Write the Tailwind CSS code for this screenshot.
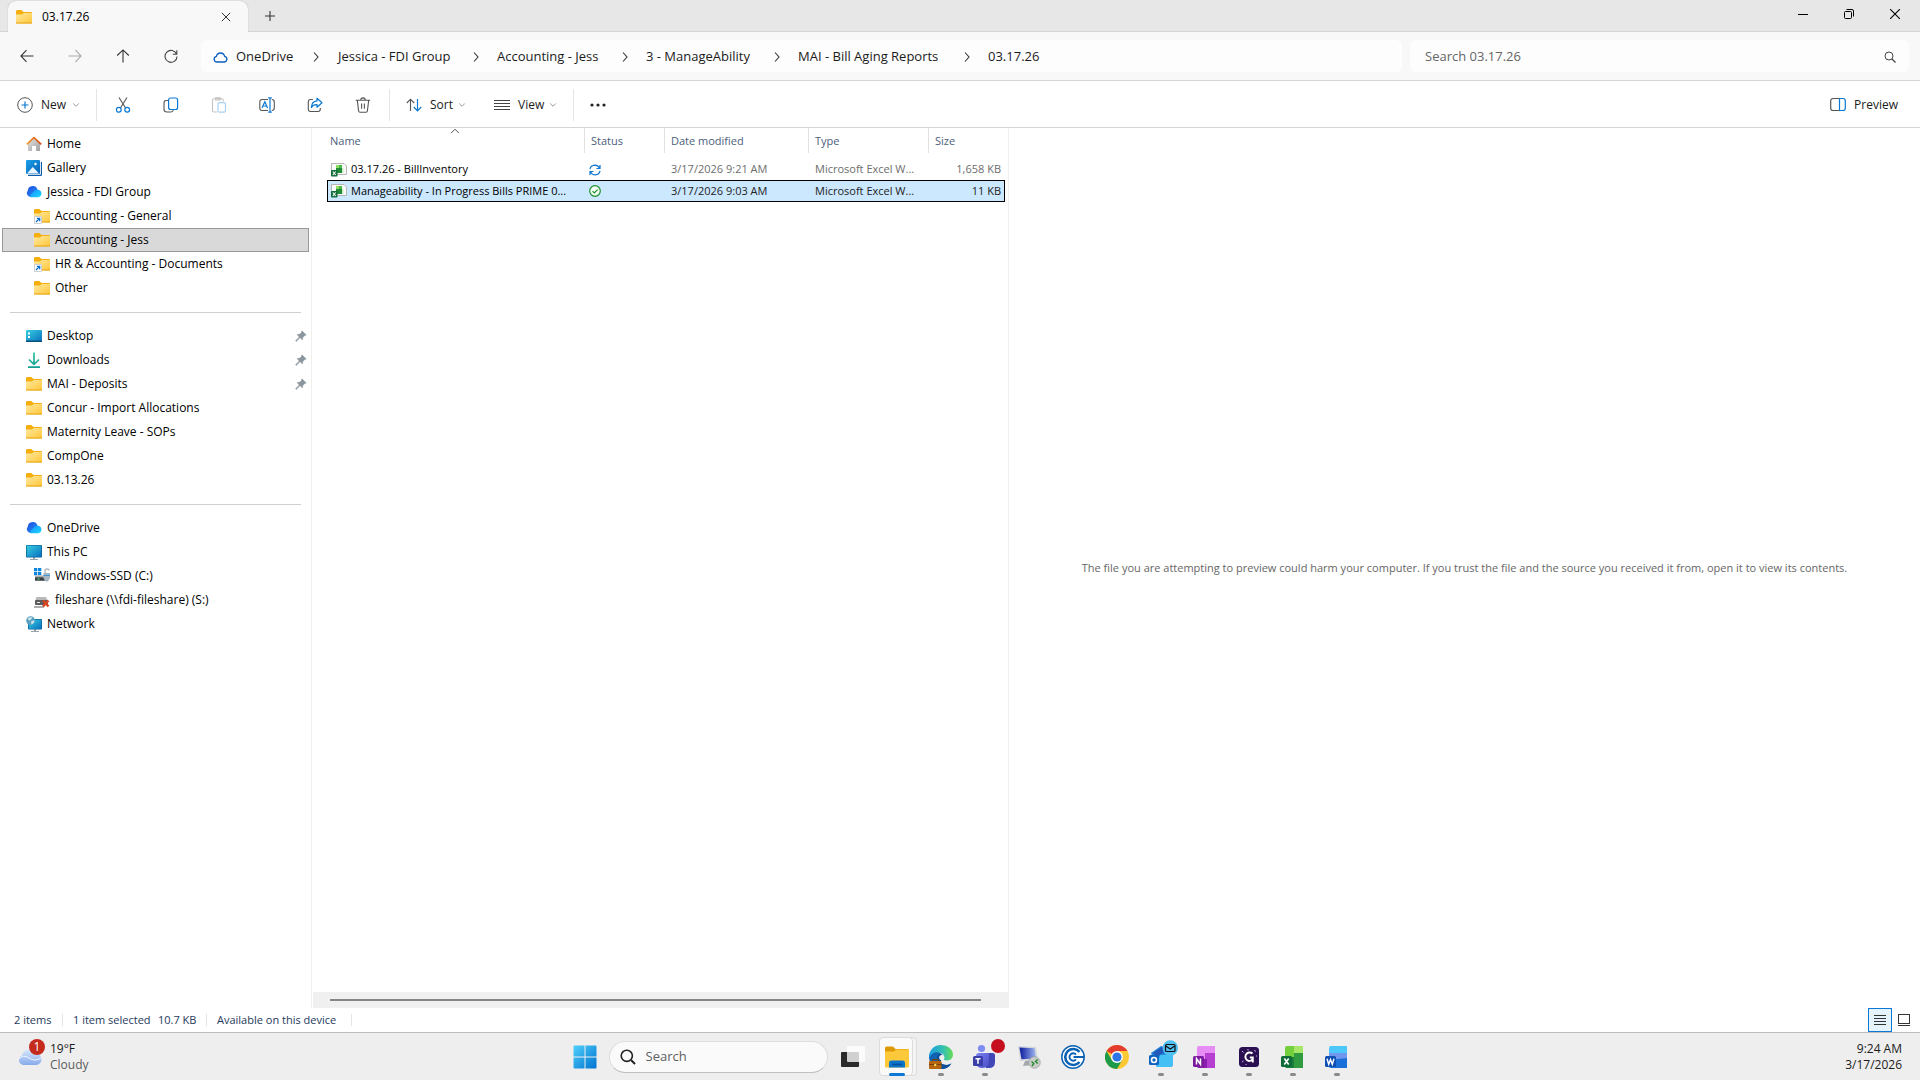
<!DOCTYPE html>
<html lang="en">
<head>
<meta charset="utf-8">
<title>03.17.26 - File Explorer</title>
<script src="https://cdn.jsdelivr.net/npm/@tailwindcss/browser@4"></script>
</head>
<body class="flex h-screen flex-col overflow-hidden bg-white font-['Open_Sans','Noto_Sans',sans-serif] text-xs text-black">

<!-- Shared gradients and icons -->
<svg class="absolute size-0" aria-hidden="true">
  <defs>
    <linearGradient id="gFolder" x1="0" y1="0" x2="1" y2="1"><stop offset="0" stop-color="#ffe9a2"/><stop offset="1" stop-color="#fdc638"/></linearGradient>
    <linearGradient id="gBlue" x1="0" y1="0" x2="1" y2="1"><stop offset="0" stop-color="#35d0e0"/><stop offset="1" stop-color="#0a6fc0"/></linearGradient>
    <linearGradient id="gPic" x1="0" y1="0" x2="1" y2="1"><stop offset="0" stop-color="#1aa0ea"/><stop offset="1" stop-color="#0a62b8"/></linearGradient>
    <linearGradient id="gHouse" x1="0" y1="0" x2="1" y2="1"><stop offset="0" stop-color="#e4e4e4"/><stop offset="1" stop-color="#a0a0a0"/></linearGradient>
    <linearGradient id="gRoof" x1="0" y1="0" x2="1" y2="0"><stop offset="0" stop-color="#f59a2c"/><stop offset="1" stop-color="#d44a17"/></linearGradient>
    <linearGradient id="gDown" x1="0" y1="0" x2="0" y2="16" gradientUnits="userSpaceOnUse"><stop offset="0" stop-color="#2cc39a"/><stop offset="1" stop-color="#0f9d94"/></linearGradient>
    <linearGradient id="gWin" x1="0" y1="0" x2="1" y2="1"><stop offset="0" stop-color="#4fd0fb"/><stop offset="1" stop-color="#0072d0"/></linearGradient>
    <linearGradient id="gCloudA" x1="0" y1="0" x2="1" y2="1"><stop offset="0" stop-color="#1b52d8"/><stop offset="1" stop-color="#2a8bff"/></linearGradient>
    <linearGradient id="gCloudB" x1="0" y1="0" x2="1" y2="1"><stop offset="0" stop-color="#1f8fff"/><stop offset="1" stop-color="#15d8ff"/></linearGradient>
    <linearGradient id="gWeather" x1="0" y1="0" x2="0" y2="1"><stop offset="0" stop-color="#d8e8fd"/><stop offset="1" stop-color="#86aaea"/></linearGradient>
    <linearGradient id="gEdge" x1="0" y1="0" x2="1" y2="0"><stop offset="0" stop-color="#1b9de2"/><stop offset=".6" stop-color="#35c1b0"/><stop offset="1" stop-color="#66dd55"/></linearGradient>
    <linearGradient id="gTeams" x1="0" y1="0" x2="1" y2="1"><stop offset="0" stop-color="#7b83f5"/><stop offset="1" stop-color="#4a4fc4"/></linearGradient>
    <linearGradient id="gScreen" x1="0" y1="0" x2="1" y2="0"><stop offset="0" stop-color="#0a1a9c"/><stop offset="1" stop-color="#9fb7f0"/></linearGradient>
  </defs>
  <symbol id="folder" viewBox="0 0 16 16">
    <path d="M0 2.5Q0 1 1.2 1H5.4L7.6 3H15Q16 3 16 4V7H0Z" fill="#f5ae0d"/>
    <path d="M0 5.5H6L7.800 4H16V14Q16 14.500 15.500 14.500H.5Q0 14.500 0 14Z" fill="url(#gFolder)"/>
    <path d="M0 13.500H16V14Q16 14.500 15.500 14.500H.5Q0 14.500 0 14Z" fill="#e8a317"/>
  </symbol>
  <symbol id="folder-link" viewBox="0 0 16 16">
    <use href="#folder"/>
    <path d="M.5 8.5H7.5V15.5H.5Z" fill="#fff" stroke="#cfcfcf"/>
    <path d="M2 14L5.4 10.6M2.8 10.3H5.7V13.2" fill="none" stroke="#0a6fcf" stroke-width="1.3"/>
  </symbol>
  <symbol id="onedrive" viewBox="0 0 16 16">
    <path d="M4.500 13A4 4 0 0 1 1.800 6.400 5 5 0 0 1 11.500 5.500L6 13Z" fill="url(#gCloudA)"/>
    <path d="M4.400 13.200Q3.600 10.600 7 8.200 10 4.600 13.200 6A3.800 3.800 0 0 1 12.600 13.200Z" fill="url(#gCloudB)"/>
  </symbol>
  <symbol id="pin" viewBox="0 0 12 12">
    <path d="M7 .8L11.2 5 9.6 5.5 7.8 7.6 7.4 9.8 5 7.6 1.2 11.4.6 10.8 4.4 7 2.2 4.6 4.6 4.2 6.6 2.4Z" fill="#8a949c" stroke="#8a949c" stroke-width=".6"/>
  </symbol>
  <symbol id="excel-file" viewBox="0 0 16 16">
    <path d="M.5 1.500H13L15.500 4V12.500H.5Z" fill="#fafafa" stroke="#b5b5b5"/>
    <path d="M5 3H8V6H5Z" fill="#8fdc62"/><path d="M8 3H11V6H8Z" fill="#4cb944"/><path d="M5 6H11V11H5Z" fill="#1f8a38"/><path d="M11 6H12.500V11H11Z" fill="#cfeec2"/>
    <rect x="0" y="8" width="6.500" height="6.500" rx=".8" fill="#0f6b38"/>
    <path d="M1.800 9.500L4.700 13M4.700 9.500L1.800 13" stroke="#fff" stroke-width="1.100"/>
  </symbol>
  <symbol id="chev-right" viewBox="0 0 8 12"><path d="M2 1.5L6 6 2 10.5" fill="none" stroke="#333" stroke-width="1.1"/></symbol>
  <symbol id="chev-down" viewBox="0 0 8 8"><path d="M1.2 2.5L4 5.3 6.8 2.5" fill="none" stroke="#999" stroke-width="1"/></symbol>
</svg>

<!-- Tab strip -->
<header class="flex h-8 shrink-0 items-stretch border-b border-[#d4d4d4] bg-[#e7e7e7]">
  <div class="-mb-px ml-2 mt-px flex w-60 items-center rounded-t-lg bg-[#f8f8f8] pl-2 pr-3 shadow-[0_0_1px_#999] [clip-path:inset(-2px_-2px_0_-2px)]">
    <svg class="size-4"><use href="#folder"/></svg>
    <span class="ml-2.5 flex-1">03.17.26</span>
    <button class="grid size-5 place-items-center" aria-label="Close tab"><svg class="size-2.5" viewBox="0 0 10 10"><path d="M.8.8L9.2 9.2M9.2.8L.8 9.2" stroke="#333"/></svg></button>
  </div>
  <button class="ml-2.5 grid w-6 place-items-center" aria-label="New tab"><svg class="size-3" viewBox="0 0 12 12"><path d="M6 1V11M1 6H11" stroke="#333" stroke-width="1.1"/></svg></button>
  <div class="ml-auto flex h-7 pr-0.5">
    <button class="grid w-[46px] place-items-center" aria-label="Minimize"><svg class="size-2.5" viewBox="0 0 10 10"><path d="M0 5.5H10" stroke="#000"/></svg></button>
    <button class="grid w-[46px] place-items-center" aria-label="Restore"><svg class="size-2.5" viewBox="0 0 10 10"><rect x=".5" y="2.5" width="7" height="7" rx="1" fill="none" stroke="#000"/><path d="M2.5.5H8Q9.5.5 9.5 2V7.5" fill="none" stroke="#000"/></svg></button>
    <button class="grid w-[46px] place-items-center" aria-label="Close window"><svg class="size-2.5" viewBox="0 0 10 10"><path d="M0 0L10 10M10 0L0 10" stroke="#000" stroke-width="1.1"/></svg></button>
  </div>
</header>

<!-- Navigation and address -->
<div class="flex h-[49px] shrink-0 items-center border-b border-[#d4d4d4] bg-[#f8f8f8] pr-[11px] text-[#1b1b1b]">
  <nav class="flex w-[201px] gap-6 pl-[15px]" aria-label="History">
    <button class="grid size-6 place-items-center" aria-label="Back"><svg class="size-3.5" viewBox="0 0 14 14"><path d="M13.5 7H1M6.5 1.2L.9 7 6.5 12.8" fill="none" stroke="#333" stroke-width="1.1"/></svg></button>
    <button class="grid size-6 place-items-center" aria-label="Forward" disabled><svg class="size-3.5" viewBox="0 0 14 14"><path d="M.5 7H13M7.5 1.2L13.1 7 7.5 12.8" fill="none" stroke="#aaa" stroke-width="1.1"/></svg></button>
    <button class="grid size-6 place-items-center" aria-label="Up"><svg class="size-3.5" viewBox="0 0 14 14"><path d="M7 13.5V1M1.2 6.5L7 .9 12.8 6.5" fill="none" stroke="#333" stroke-width="1.1"/></svg></button>
    <button class="grid size-6 place-items-center" aria-label="Refresh"><svg class="size-3.5" viewBox="0 0 14 14"><path d="M12.6 5.2A6 6 0 1 0 13 7.4M12.8 1.2V5.2H8.8" fill="none" stroke="#444" stroke-width="1.1"/></svg></button>
  </nav>
  <nav class="flex h-8 flex-1 items-center rounded-md bg-[#fdfdfd] pl-3 pt-px text-[13px]" aria-label="Address">
    <svg class="mr-2 h-3.5 w-[15px]" viewBox="0 0 15 14"><path d="M3.6 12A2.9 2.9 0 0 1 3.4 6.3 4.2 4.2 0 0 1 11.6 6.3 2.9 2.9 0 0 1 11.4 12Z" fill="none" stroke="#0a5fc0" stroke-width="1.3"/></svg>
    <a href="#" class="w-[58px] whitespace-nowrap">OneDrive</a><svg class="mx-[18px] h-3 w-2"><use href="#chev-right"/></svg>
    <a href="#" class="w-[117px] whitespace-nowrap">Jessica - FDI Group</a><svg class="mx-[17px] h-3 w-2"><use href="#chev-right"/></svg>
    <a href="#" class="w-[107px] whitespace-nowrap">Accounting - Jess</a><svg class="mx-[17px] h-3 w-2"><use href="#chev-right"/></svg>
    <a href="#" class="w-[110px] whitespace-nowrap">3 - ManageAbility</a><svg class="mx-[17px] h-3 w-2"><use href="#chev-right"/></svg>
    <a href="#" class="w-[148px] whitespace-nowrap">MAI - Bill Aging Reports</a><svg class="mx-[17px] h-3 w-2"><use href="#chev-right"/></svg>
    <a href="#">03.17.26</a>
  </nav>
  <label class="ml-2 flex h-8 w-[499px] items-center rounded-md bg-[#fdfdfd] pl-[15px] pr-[13px] pt-px text-[13px]">
    <input type="search" placeholder="Search 03.17.26" aria-label="Search 03.17.26" class="min-w-0 flex-1 bg-transparent outline-none placeholder:text-[#666]">
    <svg class="size-3" viewBox="0 0 12 12"><circle cx="5" cy="5" r="4" fill="none" stroke="#444"/><path d="M8 8L11.5 11.5" stroke="#444" stroke-width="1.2"/></svg>
  </label>
</div>

<!-- Command bar -->
<div class="flex h-[47px] shrink-0 items-center border-b border-[#d4d4d4] pl-[17px] pr-[22px] pt-0.5 text-[#1b1b1b]" role="toolbar">
  <button class="flex items-center"><svg class="mr-2 size-4" viewBox="0 0 16 16"><circle cx="8" cy="8" r="7.3" fill="none" stroke="#555"/><path d="M8 4.5V11.5M4.5 8H11.5" stroke="#0a78d4" stroke-width="1.2"/></svg><span class="w-[31px] text-left">New</span><svg class="size-2"><use href="#chev-down"/></svg></button>
  <div class="ml-4 mr-3.5 h-8 w-px bg-[#e5e5e5]"></div>
  <div class="flex gap-6">
    <button class="grid size-6 place-items-center" aria-label="Cut"><svg class="size-4" viewBox="0 0 16 16"><path d="M4 .5L10.6 11M12 .5L5.4 11" stroke="#555" stroke-width="1.1"/><circle cx="3.8" cy="12.8" r="2.4" fill="none" stroke="#0a78d4" stroke-width="1.2"/><circle cx="12.2" cy="12.8" r="2.4" fill="none" stroke="#0a78d4" stroke-width="1.2"/></svg></button>
    <button class="grid size-6 place-items-center" aria-label="Copy"><svg class="size-4" viewBox="0 0 16 16"><path d="M5 3.5H3Q1 3.5 1 6V12.5Q1 15 4 15H8Q10 15 10.3 13" fill="none" stroke="#555" stroke-width="1.1"/><rect x="5.6" y="1" width="9" height="11.5" rx="2" fill="none" stroke="#0a78d4" stroke-width="1.2"/></svg></button>
    <button class="grid size-6 place-items-center" aria-label="Paste" disabled><svg class="size-4" viewBox="0 0 16 16"><path d="M6 15H3Q1.5 15 1.5 13.5V3Q1.5 1.8 3 1.8H11Q12.3 1.8 12.3 3V4.5M4.5.8H9.3V3H4.5Z" fill="none" stroke="#c4c4c4" stroke-width="1.1"/><rect x="7" y="5.6" width="7.5" height="9.6" rx="1.5" fill="none" stroke="#a9d0f0" stroke-width="1.2"/></svg></button>
    <button class="grid size-6 place-items-center" aria-label="Rename"><svg class="size-4" viewBox="0 0 16 16"><path d="M9 2.5H3Q.8 2.5.8 5V11Q.8 13.5 3 13.5H9M12.8 2.5Q15.3 2.5 15.3 5V11Q15.3 13.5 12.8 13.5" fill="none" stroke="#555" stroke-width="1.1"/><path d="M3 11L5.8 4.8 8.6 11M4 9H7.6M11 .8V15.2M9.2.8H12.8M9.2 15.2H12.8" fill="none" stroke="#0a78d4" stroke-width="1.2"/></svg></button>
    <button class="grid size-6 place-items-center" aria-label="Share"><svg class="size-4" viewBox="0 0 16 16"><path d="M6 2.5H3.5Q1.3 2.5 1.3 5V12Q1.3 14.5 3.5 14.5H11Q13.3 14.5 13.3 12V11" fill="none" stroke="#555" stroke-width="1.1"/><path d="M10 1.2L15 5.8 10 10.2V7.7Q6 7.5 4.4 10.5 4.6 4.4 10 3.9Z" fill="none" stroke="#0a78d4" stroke-width="1.2" stroke-linejoin="round"/></svg></button>
    <button class="grid size-6 place-items-center" aria-label="Delete"><svg class="size-4" viewBox="0 0 16 16"><path d="M.8 3.2H15.2M5.8 3Q5.8.9 8 .9T10.2 3M2.3 3.4L3.6 14Q3.8 15.2 5 15.2H11Q12.2 15.2 12.4 14L13.7 3.4M6.6 6.4V11.8M9.4 6.4V11.8" fill="none" stroke="#555" stroke-width="1.1"/></svg></button>
  </div>
  <div class="ml-3.5 mr-4 h-8 w-px bg-[#e5e5e5]"></div>
  <button class="flex items-center"><svg class="mr-2 size-4" viewBox="0 0 16 16"><path d="M4.5 14V2.5M.8 6L4.5 2.2 8.2 6" fill="none" stroke="#555" stroke-width="1.1"/><path d="M11.5 2V13.5M7.8 10L11.5 13.8 15.2 10" fill="none" stroke="#0a78d4" stroke-width="1.2"/></svg><span class="w-7 text-left">Sort</span><svg class="size-2"><use href="#chev-down"/></svg></button>
  <button class="ml-7 flex items-center"><svg class="mr-2 size-4" viewBox="0 0 16 16"><path d="M0 3.5H16M0 6.5H16M0 9.5H16M0 12.5H16" stroke="#444"/></svg><span class="w-[31px] text-left">View</span><svg class="size-2"><use href="#chev-down"/></svg></button>
  <div class="ml-4 mr-[15px] h-8 w-px bg-[#e5e5e5]"></div>
  <button class="grid h-6 w-[18px] place-items-center" aria-label="See more"><svg class="h-1 w-4" viewBox="0 0 16 4"><circle cx="2" cy="2" r="1.6" fill="#222"/><circle cx="8" cy="2" r="1.6" fill="#222"/><circle cx="14" cy="2" r="1.6" fill="#222"/></svg></button>
  <button class="ml-auto flex items-center gap-2"><svg class="size-4" viewBox="0 0 16 16"><path d="M9.5 1.500H3Q.7 1.500.7 4V11Q.7 13.500 3 13.500H9.500" fill="none" stroke="#555" stroke-width="1.2"/><path d="M9.500 1.500H13Q15.300 1.500 15.300 4V11Q15.300 13.500 13 13.500H9.500Z" fill="none" stroke="#0a78d4" stroke-width="1.2"/></svg>Preview</button>
</div>

<div class="flex min-h-0 flex-1">
  <!-- Navigation pane -->
  <nav class="w-[312px] shrink-0 border-r border-[#f0f0f0] pl-0.5 pr-0.5 pt-1" aria-label="Folders">
    <ul class="[&_a]:flex [&_a]:h-6 [&_a]:items-center [&_a]:gap-[5px] [&_a]:pl-6 [&_a]:pr-0.5 [&_svg]:size-4">
      <li><a href="#"><svg viewBox="0 0 16 16"><path d="M2 7L8 2.2 14 7V14.5Q14 15 13.5 15H10V10H6V15H2.500Q2 15 2 14.5Z" fill="url(#gHouse)"/><path d="M.8 8.300L8 1.600 15.200 8.300" fill="none" stroke="url(#gRoof)" stroke-width="1.700" stroke-linejoin="round"/></svg>Home</a></li>
      <li><a href="#"><svg viewBox="0 0 16 16"><path d="M2 15.500H14Q15.500 15.500 15.500 14V2" fill="none" stroke="#0c5cab" stroke-width="1.300"/><rect width="14" height="14" rx="1" fill="url(#gPic)"/><path d="M1 13.500L6.800 7 13 13.500Z" fill="#eaf5ff"/><circle cx="9.500" cy="4" r="1.200" fill="#fff"/></svg>Gallery</a></li>
      <li><a href="#"><svg><use href="#onedrive"/></svg>Jessica - FDI Group</a></li>
      <li class="[&>a]:pl-8"><a href="#"><svg><use href="#folder-link"/></svg>Accounting - General</a></li>
      <li class="[&>a]:pl-8"><a href="#" aria-current="true" class="bg-[#d9d9d9] outline outline-[#999] -outline-offset-1"><svg><use href="#folder"/></svg>Accounting - Jess</a></li>
      <li class="[&>a]:pl-8"><a href="#"><svg><use href="#folder-link"/></svg>HR &amp; Accounting - Documents</a></li>
      <li class="[&>a]:pl-8"><a href="#"><svg><use href="#folder"/></svg>Other</a></li>
    </ul>
    <hr class="my-3 ml-2 mr-2 -mb-px border-[#cfcfcf]">
    <ul class="pt-3 [&_a]:flex [&_a]:h-6 [&_a]:items-center [&_a]:gap-[5px] [&_a]:pl-6 [&_a]:pr-0.5">
      <li><a href="#"><svg class="size-4" viewBox="0 0 16 16"><rect y="2" width="16" height="12" rx="1" fill="url(#gBlue)"/><path d="M2 4.500H4V6.500H2ZM2 8H4V10H2Z" fill="#fff"/><path d="M0 12.500H16V14H0Z" fill="#0b4f7d"/></svg><span class="flex-1">Desktop</span><svg class="size-3"><use href="#pin"/></svg></a></li>
      <li><a href="#"><svg class="size-4" viewBox="0 0 16 16"><path d="M8 .5V12M3 7.500L8 12.300 13 7.500M2 15.200H14" fill="none" stroke="url(#gDown)" stroke-width="1.700"/></svg><span class="flex-1">Downloads</span><svg class="size-3"><use href="#pin"/></svg></a></li>
      <li><a href="#"><svg class="size-4"><use href="#folder"/></svg><span class="flex-1">MAI - Deposits</span><svg class="size-3"><use href="#pin"/></svg></a></li>
      <li><a href="#"><svg class="size-4"><use href="#folder"/></svg>Concur - Import Allocations</a></li>
      <li><a href="#"><svg class="size-4"><use href="#folder"/></svg>Maternity Leave - SOPs</a></li>
      <li><a href="#"><svg class="size-4"><use href="#folder"/></svg>CompOne</a></li>
      <li><a href="#"><svg class="size-4"><use href="#folder"/></svg>03.13.26</a></li>
    </ul>
    <hr class="my-3 ml-2 mr-2 -mb-px border-[#cfcfcf]">
    <ul class="pt-3 [&_a]:flex [&_a]:h-6 [&_a]:items-center [&_a]:gap-[5px] [&_a]:pl-6 [&_a]:pr-0.5 [&_svg]:size-4">
      <li><a href="#"><svg><use href="#onedrive"/></svg>OneDrive</a></li>
      <li><a href="#"><svg viewBox="0 0 16 16"><path d="M7 13H9V15H12V16H4V15H7Z" fill="#9aa4ac"/><rect y="1" width="16" height="12.500" rx="1" fill="#0b5f94"/><rect x=".7" y="1.600" width="14.600" height="11.200" fill="url(#gBlue)"/></svg>This PC</a></li>
      <li class="[&>a]:pl-8"><a href="#"><svg viewBox="0 0 16 16"><path d="M0 0H3.300V3.300H0ZM4 0H7.300V3.300H4ZM0 4H3.300V7.300H0ZM4 4H7.300V7.300H4Z" fill="#0c86dc"/><rect x="1" y="7.500" width="9" height="2" fill="#ababab"/><rect x="1" y="9.300" width="11" height="3.400" rx=".5" fill="#3a3f44"/><path d="M3.500 11H5.500" stroke="#3fe07a" stroke-width="1.200"/><path d="M11 5V3Q11 1 13 1T15 2.500" fill="none" stroke="#b0b8be" stroke-width="1.400"/><path d="M9.500 5H16V10Q15.500 12.500 12.800 14 10 12.500 9.500 10Z" fill="#a6b6c2"/><path d="M9.500 7.500H16" stroke="#3d98d8"/></svg>Windows-SSD (C:)</a></li>
      <li class="[&>a]:pl-8"><a href="#"><svg viewBox="0 0 16 16"><path d="M2.500 5H12L14 9H1Z" fill="#b9b9b9"/><rect x="1" y="8" width="13" height="5" rx="1" fill="#5c5c5c"/><path d="M3 10.500H6" stroke="#eee"/><path d="M0 15H10" stroke="#999" stroke-width="1.600"/><path d="M9 8.500L14.500 14.500M14.500 8.500L9 14.500" stroke="#d9431e" stroke-width="2.400"/></svg>fileshare (\\fdi-fileshare) (S:)</a></li>
      <li><a href="#"><svg viewBox="0 0 16 16"><path d="M8 13H10V15H13V16H5V15H8Z" fill="#9aa4ac"/><rect x="2" y="3" width="14" height="10.500" rx="1" fill="#0b5f94"/><rect x="2.700" y="3.600" width="12.600" height="9.300" fill="url(#gBlue)"/><circle cx="4.600" cy="4.600" r="4.400" fill="#5a9fc0"/><path d="M1.500 2.500Q4 .5 6.500 1.500 5 4 3 4.500ZM5 5.500Q8 4 8.500 5 8 8 5.500 8.500Z" fill="#cfe6ee"/></svg>Network</a></li>
    </ul>
  </nav>

  <!-- File list -->
  <main class="flex w-[697px] shrink-0 flex-col border-r border-[#f0f0f0]">
    <div class="relative flex-1 pl-[15px]">
      <svg class="absolute left-[138px] top-0 h-1.5 w-2.5" viewBox="0 0 10 6"><path d="M1.200 5L5 1.200 8.800 5" fill="none" stroke="#555"/></svg>
      <table class="w-[678px] table-fixed text-left text-[11px]">
        <colgroup><col class="w-[258px]"><col class="w-20"><col class="w-36"><col class="w-[120px]"><col class="w-[76px]"></colgroup>
        <thead>
          <tr class="h-[31px] align-top text-[#4c607a] [&>th]:p-0 [&>th]:font-normal [&_div]:h-[25px] [&_div]:border-[#e2e2e2] [&_div]:leading-[25px]">
            <th><div class="border-r pl-[3px]">Name</div></th>
            <th><div class="border-r pl-1.5">Status</div></th>
            <th><div class="border-r pl-1.5">Date modified</div></th>
            <th><div class="border-r pl-1.5">Type</div></th>
            <th><div class="pl-1.5">Size</div></th>
          </tr>
        </thead>
        <tbody class="[&_td]:p-0 [&_td]:whitespace-nowrap">
          <tr class="h-[21px] text-[#6d6d6d]">
            <td><div class="flex items-center gap-1 pl-1 text-black"><svg class="size-4 shrink-0"><use href="#excel-file"/></svg>03.17.26 - BillInventory</div></td>
            <td><svg class="ml-1 size-3" viewBox="0 0 12 12" role="img" aria-label="Sync pending"><path d="M1 5.200Q1.500 1.500 5.800 1.200 9 1.200 10.700 4.300M11 1V4.500H7.500M11 6.800Q10.500 10.500 6.200 10.800 3 10.800 1.300 7.700M1 11V7.500H4.500" fill="none" stroke="#0a78d4" stroke-width="1.200"/></svg></td>
            <td><div class="pl-1.5">3/17/2026 9:21 AM</div></td>
            <td><div class="pl-1.5">Microsoft Excel W...</div></td>
            <td><div class="pr-1 text-right">1,658 KB</div></td>
          </tr>
          <tr class="h-[22px] bg-[#cce8ff] text-[#222] outline outline-black -outline-offset-1">
            <td><div class="flex items-center gap-1 pl-1 text-black"><svg class="size-4 shrink-0"><use href="#excel-file"/></svg>Manageability - In Progress Bills PRIME 0...</div></td>
            <td><svg class="ml-1 size-3" viewBox="0 0 12 12" role="img" aria-label="Available on this device"><circle cx="6" cy="6" r="5.300" fill="#f4fff4" stroke="#1e8f2e" stroke-width="1.200"/><path d="M3.500 6.200L5.300 8 8.600 4.600" fill="none" stroke="#1e8f2e" stroke-width="1.200"/></svg></td>
            <td><div class="pl-1.5">3/17/2026 9:03 AM</div></td>
            <td><div class="pl-1.5">Microsoft Excel W...</div></td>
            <td><div class="pr-1 text-right">11 KB</div></td>
          </tr>
        </tbody>
      </table>
    </div>
    <div class="ml-px flex h-4 items-center bg-[#f0f0f0] pl-[17px] pr-[27px]"><div class="h-0.5 flex-1 bg-[#858585]"></div></div>
  </main>

  <!-- Preview pane -->
  <section class="flex flex-1 items-center justify-center text-[11px] text-[#666]"><p class="whitespace-nowrap">The file you are attempting to preview could harm your computer. If you trust the file and the source you received it from, open it to view its contents.</p></section>
</div>

<!-- Status bar -->
<div class="flex h-6 shrink-0 items-center pl-3.5 pr-2 text-[11px] text-[#1e395b]">
  <span class="w-12">2 items</span><i class="mr-2.5 h-3 w-px bg-[#e5e5e5]"></i>
  <span class="w-[85px] whitespace-nowrap">1 item selected</span><span class="w-12 whitespace-nowrap">10.7 KB</span><i class="mr-2.5 h-3 w-px bg-[#e5e5e5]"></i>
  <span class="w-[134px] whitespace-nowrap">Available on this device</span><i class="h-3 w-px bg-[#e5e5e5]"></i>
  <button class="ml-auto grid size-6 place-items-center border border-[#0a78d4] bg-[#e5f3fb]" aria-label="Details view"><svg class="size-3" viewBox="0 0 12 12"><path d="M0 1.500H12M0 4.500H12M0 7.500H12M0 10.500H12" stroke="#333"/></svg></button>
  <button class="grid h-6 w-5 place-items-center pl-1" aria-label="Large icons view"><svg class="size-3" viewBox="0 0 12 12"><rect x=".5" y=".5" width="11" height="9" fill="none" stroke="#333"/><path d="M0 11.500H12" stroke="#333"/></svg></button>
</div>

<!-- Taskbar -->
<footer class="grid h-12 shrink-0 grid-cols-[1fr_auto_1fr] items-stretch border-t border-[#bdbdbd] bg-[#eee]">
  <button class="flex items-center gap-2 pl-[18px] text-left leading-4">
    <span class="relative"><svg class="h-6 w-6" viewBox="0 0 24 24"><path d="M5 20A5 5 0 0 1 4 10.500 7.500 7.500 0 0 1 18 8.500 5.800 5.800 0 0 1 18.500 20Z" fill="url(#gWeather)"/><path d="M1 14Q5 9 11 13T23 13" fill="none" stroke="#eef5ff"/></svg>
    <span class="absolute -right-[3px] -top-1.5 grid size-4 place-items-center rounded-full bg-[#c42b1c] text-white">1</span></span>
    <span><span class="block text-[#1b1b1b]">19°F</span><span class="block text-[#5c5c5c]">Cloudy</span></span>
  </button>
  <div class="flex items-center pl-px [&>button]:relative [&>button]:grid [&>button]:h-full [&>button]:w-11 [&>button]:place-items-center [&>button>i]:absolute [&>button>i]:bottom-1 [&>button>i]:h-[3px] [&>button>i]:w-1.5 [&>button>i]:rounded-full [&>button>i]:bg-[#8a8a8a]">
    <button aria-label="Start"><svg class="size-6" viewBox="0 0 24 24"><path d="M1.500.5H11.500V11.500H.5V1.500Q.5.5 1.500.5ZM12.500.5H22.500Q23.500.5 23.500 1.500V11.500H12.500ZM.5 12.500H11.500V23.500H1.500Q.5 23.500.5 22.500ZM12.500 12.500H23.500V22.500Q23.500 23.500 22.500 23.500H12.500Z" fill="url(#gWin)"/></svg></button>
    <label class="ml-0.5 mr-[3px] flex h-8 w-[219px] items-center gap-2.5 rounded-full border border-[#ddd] border-b-[#c0c0c0] bg-[#fafafa] px-2.5">
      <svg class="size-4 shrink-0" viewBox="0 0 16 16"><circle cx="6.800" cy="6.800" r="5.600" fill="none" stroke="#222" stroke-width="1.600"/><path d="M11 11L15 15" stroke="#222" stroke-width="1.900"/></svg>
      <input type="text" placeholder="Search" aria-label="Taskbar search" class="min-w-0 flex-1 bg-transparent text-[13px] outline-none placeholder:text-[#5f5f5f]">
    </label>
    <button aria-label="Task view"><svg class="size-6" viewBox="0 0 24 24"><rect x="0" y="7" width="18" height="15" rx="1" fill="#2a2a2a"/><rect x="6" y="1" width="18" height="16" rx="1" fill="#fff" fill-opacity=".78"/></svg></button>
    <button aria-label="File Explorer"><span class="absolute left-1 right-0.5 top-1 h-[39px] rounded border border-[#dcdcdc] bg-[#f4f4f4]"></span><span class="absolute left-1 right-1.5 top-1 h-[39px] rounded border border-[#dcdcdc] bg-[#fafafa]"></span>
      <svg class="relative size-6" viewBox="0 0 24 24"><path d="M0 3Q0 1.500 1.500 1.500H8L10.500 4H22.500Q24 4 24 5.500V10H0Z" fill="#dd9a06"/><path d="M0 6.500H9L11 4.500H24V21.500Q24 22.500 23 22.500H1Q0 22.500 0 21.500Z" fill="#fdc93a"/><path d="M4 22.500V18Q4 15.500 6.500 15.500H17.500Q20 15.500 20 18V22.500Z" fill="#0a74c9"/><path d="M7 19.500H17" stroke="#074f9a" stroke-width="1.600"/></svg>
      <i class="!w-4 !bg-[#0a78d4]"></i></button>
    <button aria-label="Microsoft Edge"><svg class="size-6" viewBox="0 0 24 24"><path d="M0 14A12 12 0 0 1 12 0Q23 .5 24 9.500 24 15 18 15.500 14 15.500 14.500 13 16 9.500 12 8 5 6.500 0 14Z" fill="url(#gEdge)"/><path d="M0 13Q3 6.500 10 7.500 14.500 9 13.500 12 11 11 10 14 10 19 17 20 20 20 22.500 18.500 18 25 10 24 1 22 0 13Z" fill="#1162b3"/><path d="M12 9A4 4 0 0 0 12 17Q12 20 18 20 21 19.500 22.500 18.300 19 24 13 24H12Z" fill="#0d4f98"/><circle cx="12.800" cy="12.500" r="2.600" fill="#eee"/><rect y="16" width="12.500" height="8" rx="1" fill="#b5650f"/><path d="M3.500 16V14.500H9V16M0 19.500H12.500" fill="none" stroke="#77400a"/><circle cx="6.200" cy="20" r="1.200" fill="#ffd25a"/></svg><i></i></button>
    <button aria-label="Microsoft Teams"><svg class="h-7 w-7" viewBox="0 0 28 28"><circle cx="10.500" cy="5.500" r="3.600" fill="#7f8cf3"/><path d="M15 10H21.500Q24 10 24 12.500V19Q24 25 18 25H15Z" fill="#4247b8"/><path d="M5 13Q5 10 8 10H18V18Q18 25 11.500 25 5 25 5 19Z" fill="url(#gTeams)"/><rect x="2" y="13" width="10" height="10" rx="1.500" fill="#3a3fa8"/><path d="M4.500 15.700H9.500M7 15.700V20.700" stroke="#fff" stroke-width="1.500"/></svg><span class="absolute right-0.5 top-1.5 size-3.5 rounded-full bg-[#c50f1f]"></span><i></i></button>
    <button aria-label="Remote Desktop"><svg class="size-6" viewBox="0 0 24 24"><path d="M1 1L19 2 21 15 3 16Z" fill="#d3d6dc"/><path d="M2.500 2.500L17.500 3.200 19 13.500 4.500 14.200Z" fill="url(#gScreen)"/><path d="M8 16L15 15 16 20 6 21Z" fill="#a4a8ae"/><circle cx="17.500" cy="17.500" r="5.800" fill="#c7ccc7" stroke="#999" stroke-width=".6"/><path d="M14.500 16.500L16.800 18.500 15 21M20.700 14.500L18.500 16.500 20.800 18.500" fill="none" stroke="#268a2e" stroke-width="1.400"/></svg></button>
    <button aria-label="C app"><svg class="size-6" viewBox="0 0 24 24"><circle cx="12" cy="12" r="11.200" fill="#fff" stroke="#0b61b3" stroke-width="1.500"/><path d="M18.500 7A8 8 0 1 0 18.500 17" fill="none" stroke="#0b61b3" stroke-width="2.600"/><path d="M23 12H12.500M15 9.600A3.700 3.700 0 1 0 15 14.400" fill="none" stroke="#0b61b3" stroke-width="1.900"/></svg></button>
    <button aria-label="Google Chrome"><svg class="size-6" viewBox="0 0 24 24"><circle cx="12" cy="12" r="12" fill="#fcc934"/><path d="M12 12L1.600 6A12 12 0 0 1 22.400 6H12Z" fill="#e33b2e"/><path d="M1.600 6A12 12 0 0 0 12 24L17.200 15 12 12 6.800 15Z" fill="#1e9a4b"/><circle cx="12" cy="12" r="6" fill="#fff"/><circle cx="12" cy="12" r="4.600" fill="#2e75e6"/></svg></button>
    <button aria-label="Outlook"><svg class="-mt-1.5 ml-1 h-7 w-[30px]" viewBox="0 0 30 28"><path d="M3 13L13 6 22 9 25 14V24Q25 27 22 27H9Z" fill="#1c7fd8"/><path d="M12 15L25 14V24Q25 27 22 27H8Z" fill="#45c0f5"/><path d="M5 13L14 7 20 9 9 17Z" fill="#2458b8"/><rect x="1" y="15" width="10" height="10" rx="1.500" fill="#0f62c0"/><circle cx="6" cy="20" r="2.500" fill="none" stroke="#fff" stroke-width="1.600"/><circle cx="22.300" cy="8" r="7.700" fill="#52bff2"/><rect x="17.500" y="4.500" width="9.500" height="7" rx="1" fill="none" stroke="#111" stroke-width="1.200"/><path d="M17.800 6L22.300 9 26.700 6" fill="none" stroke="#111" stroke-width="1.200"/></svg><i></i></button>
    <button aria-label="OneNote"><svg class="size-6" viewBox="0 0 24 24"><path d="M4 3Q4 1 6 1H22V14H4Z" fill="#e88cf5"/><path d="M12 8H22V23H6Q4 23 4 20V14H12Z" fill="#b53fd0"/><path d="M4 14H14V23H6Q4 23 4 21Z" fill="#8c1fb0"/><rect x="0" y="11" width="11" height="11" rx="1.500" fill="#7a1b9c"/><path d="M3.500 19.500V13.700L7.500 19.300V13.500" fill="none" stroke="#fff" stroke-width="1.500"/></svg><i></i></button>
    <button aria-label="G app"><svg class="h-6 w-6" viewBox="0 0 24 24"><rect x="2" y="2" width="20" height="20" rx="3.500" fill="#2a1050"/><path d="M15.500 8.500A4.300 4.300 0 1 0 12 16Q15.500 16 15.800 12.500H12.800M15.800 12V17.500" fill="none" stroke="#fff" stroke-width="1.900"/><path d="M5 6L6.500 7.500M17.500 5L18.500 6.500M5 17L6.500 16M19 11H20M11 4V5.500M9 19V20" stroke="#d9b8ff"/></svg><i></i></button>
    <button aria-label="Excel"><svg class="size-6" viewBox="0 0 24 24"><path d="M4 3Q4 1 6 1H14V12H4Z" fill="#73cf3c"/><path d="M13 1H22V9H13Z" fill="#a6e76a"/><path d="M13 8H22V23H6Q4 23 4 20V14H13Z" fill="#2f9a3f"/><path d="M4 12H13V23H6Q4 23 4 21Z" fill="#1b7f3c"/><rect x="0" y="11" width="11" height="11" rx="1.500" fill="#0f6b38"/><path d="M3.300 13.500L7.700 19.500M7.700 13.500L3.300 19.500" stroke="#fff" stroke-width="1.600"/></svg><i></i></button>
    <button aria-label="Word"><svg class="size-6" viewBox="0 0 24 24"><path d="M4 3Q4 1 6 1H22V9H4Z" fill="#4cc7fa"/><path d="M4 8H22V16H4Z" fill="#6f97ee"/><path d="M4 15L22 13V23H6Q4 23 4 21Z" fill="#1b6fd8"/><rect x="0" y="11" width="11" height="11" rx="1.500" fill="#0f4fb3"/><path d="M2 13.700L3.700 19.300 5.500 14.500 7.300 19.300 9 13.700" fill="none" stroke="#fff" stroke-width="1.400"/></svg><i></i></button>
  </div>
  <button class="justify-self-end pr-[18px] text-right leading-4 text-[#1b1b1b]"><time class="block">9:24 AM</time><time class="block">3/17/2026</time></button>
</footer>
</body>
</html>
